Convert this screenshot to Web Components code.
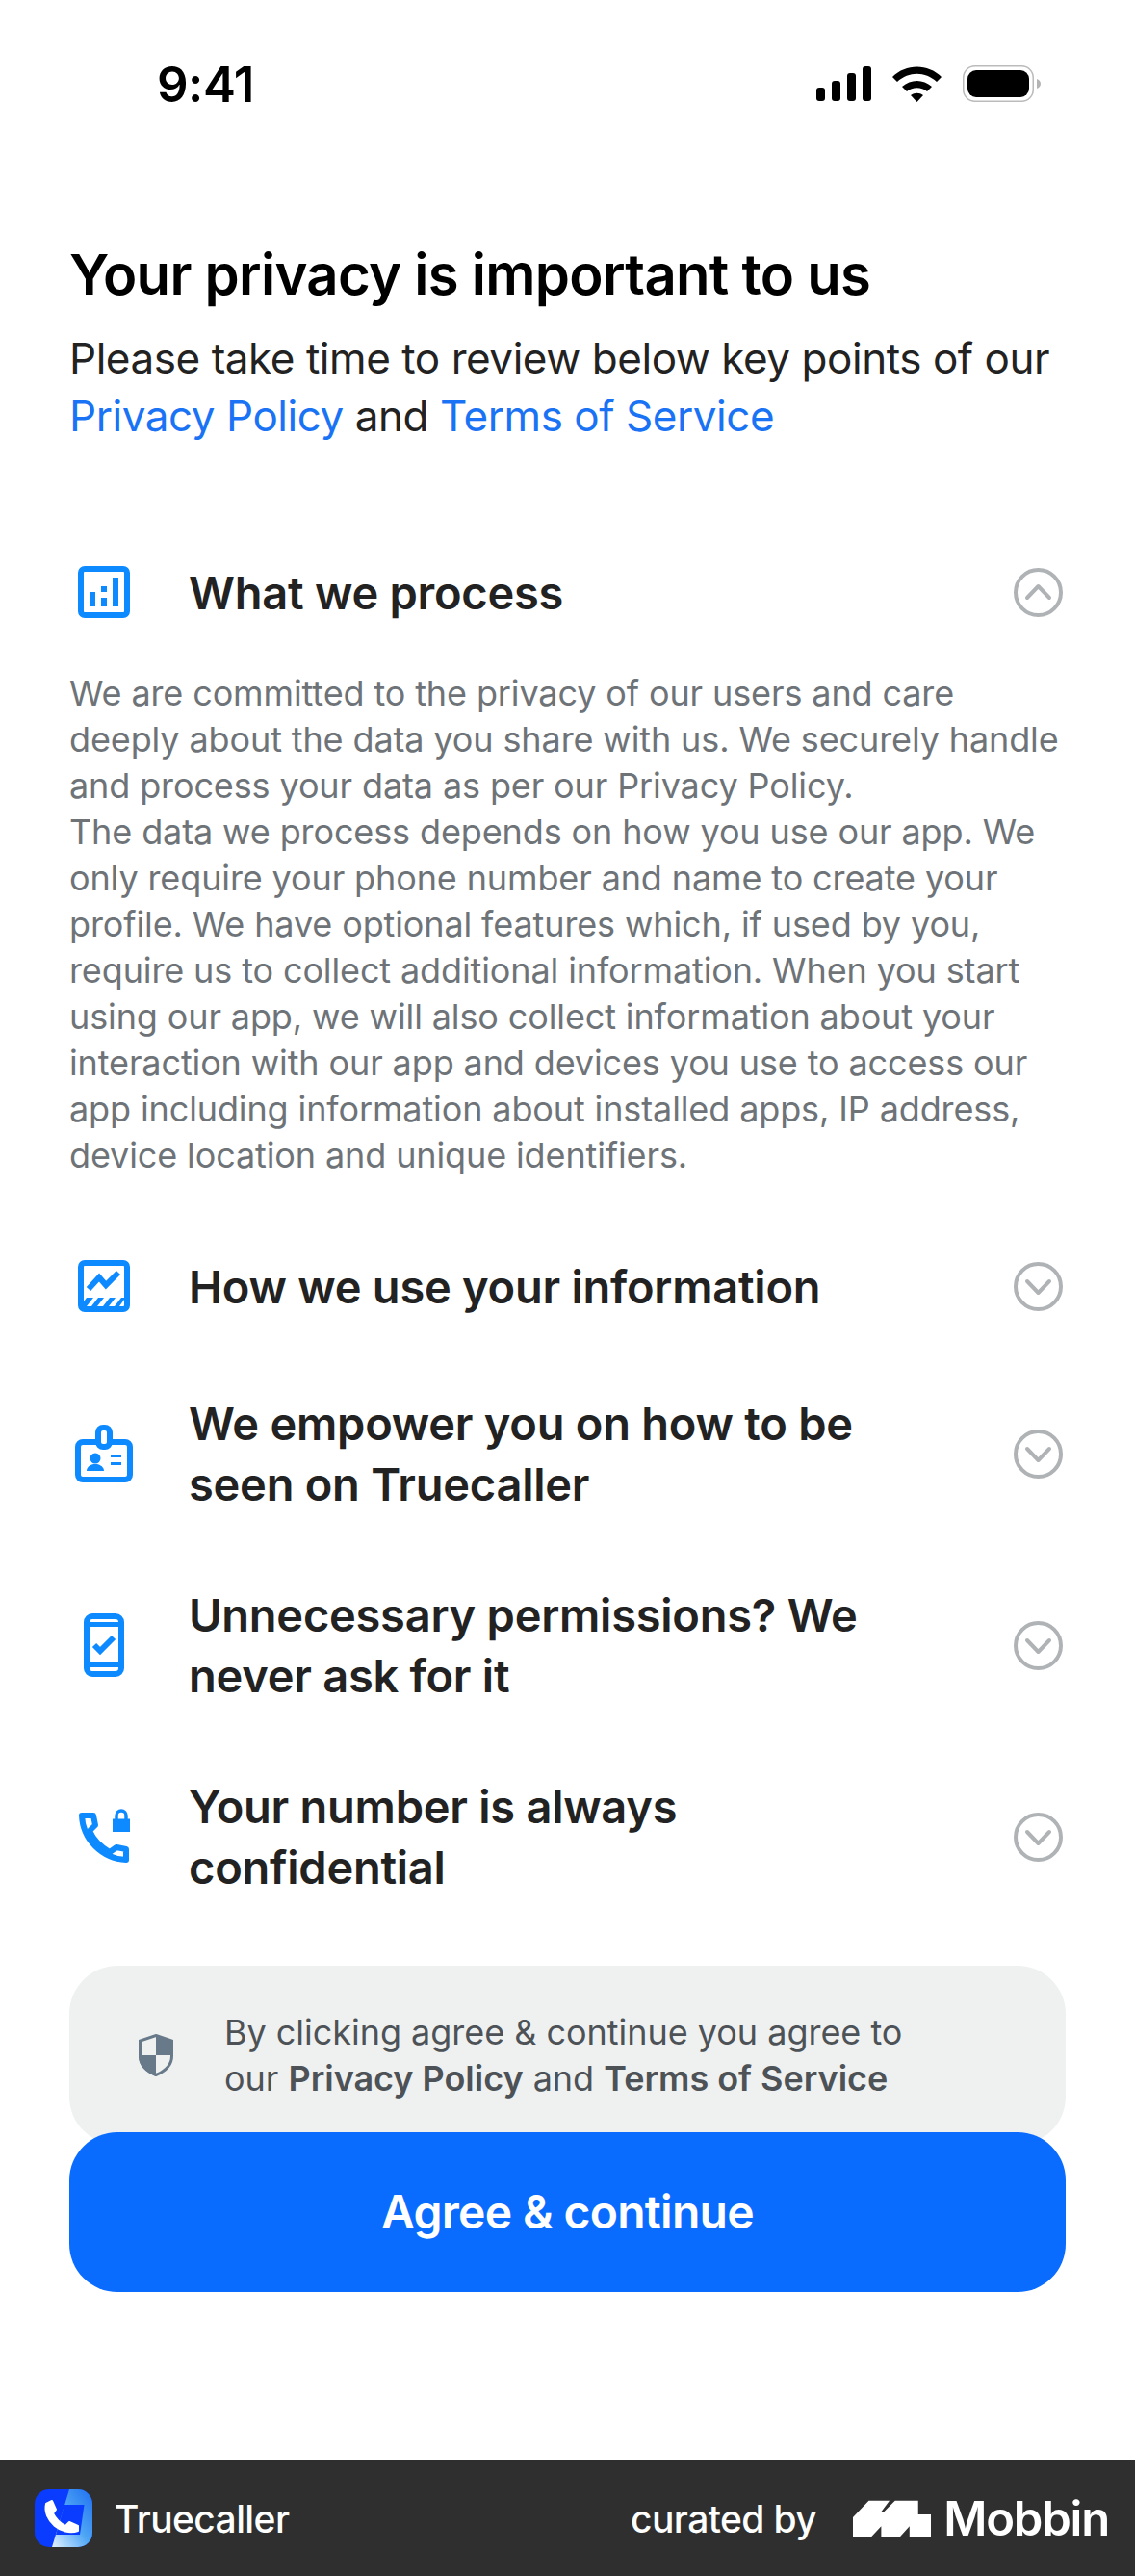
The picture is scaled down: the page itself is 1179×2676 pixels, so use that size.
<!DOCTYPE html>
<html lang="en">
<head>
<meta charset="utf-8">
<title>Truecaller privacy</title>
<style>
  html, body { margin: 0; padding: 0; background: #fff; }
  body { font-family: Inter, "Noto Sans", sans-serif; }
  a { color: #1a73f5; text-decoration: none; }
  b { font-weight: 600; }
  consent-card span { display: block; }
</style>
</head>
<body>
<privacy-screen>
  <status-bar slot="status"></status-bar>
  <privacy-intro heading="Your privacy is important to us">
    Please take time to review below key points of our
    <a>Privacy Policy</a> and <a>Terms of Service</a>
  </privacy-intro>
  <accordion-list>
    <accordion-item icon="bars" open>
      <span slot="title">What we process</span>
      We are committed to the privacy of our users and care deeply about the data you share with us. We securely handle and process your data as per our Privacy Policy.<br>
      The data we process depends on how you use our app. We only require your phone number and name to create your profile. We have optional features which, if used by you, require us to collect additional information. When you start using our app, we will also collect information about your interaction with our app and devices you use to access our app including information about installed apps, IP address, device location and unique identifiers.
    </accordion-item>
    <accordion-item icon="chart"><span slot="title">How we use your information</span></accordion-item>
    <accordion-item icon="badge"><span slot="title">We empower you on how to be seen on Truecaller</span></accordion-item>
    <accordion-item icon="phone"><span slot="title">Unnecessary permissions? We never ask for it</span></accordion-item>
    <accordion-item icon="lock"><span slot="title">Your number is always confidential</span></accordion-item>
  </accordion-list>
  <consent-card>
    <span>By clicking agree &amp; continue you agree to</span>
    <span>our <b>Privacy Policy</b> and <b>Terms of Service</b></span>
  </consent-card>
  <primary-button>Agree &amp; continue</primary-button>
  <mobbin-footer slot="footer"></mobbin-footer>
</privacy-screen>

<script>
// the icons are traced from the reference, each one sits in a 60px wide box
const ICONS = {
  bars: `<svg width="60" height="60" viewBox="0 0 60 60">
      <rect x="6" y="6" width="48" height="48" rx="4" fill="none" stroke="currentColor" stroke-width="6"/>
      <path fill="currentColor" d="M15 30h6v15h-6zM27 24h6v6h-6zM27 36h6v9h-6zM39 15h6v30h-6z"/>
    </svg>`,
  chart: `<svg width="60" height="60" viewBox="0 0 60 60">
      <rect x="6" y="6" width="48" height="48" rx="4" fill="none" stroke="currentColor" stroke-width="6"/>
      <path fill="none" stroke="currentColor" stroke-width="6" d="M14 33l11-12 7 8 13-13"/>
      <path fill="currentColor" d="M9 51v-5l3-4h7l-7 9zM17 51l7-9h6l-7 9zM29 51l7-9h6l-7 9zM41 51l7-9h3v2l-5 7z"/>
    </svg>`,
  badge: `<svg width="60" height="62" viewBox="0 0 60 62">
      <rect x="3" y="19" width="54" height="39" rx="5" fill="none" stroke="currentColor" stroke-width="6"/>
      <rect x="24" y="4" width="12" height="20" rx="5" fill="#fff" stroke="currentColor" stroke-width="6"/>
      <circle cx="21" cy="36" r="5.500" fill="currentColor"/>
      <path fill="currentColor" d="M12 49c0-4 4-7 9-7s9 3 9 7zM37 32h11v3H37zM37 40h11v3H37z"/>
    </svg>`,
  phone: `<svg width="60" height="70" viewBox="0 0 60 70">
      <rect x="12" y="5" width="36" height="60" rx="6" fill="none" stroke="currentColor" stroke-width="6"/>
      <path fill="currentColor" d="M12 11h36v5H12zM12 53h36v5H12z"/>
      <path fill="none" stroke="currentColor" stroke-width="6" d="M20 35l6 6 14-14"/>
    </svg>`,
  lock: `<svg width="60" height="60" viewBox="0 0 60 60">
      <path fill="none" stroke="currentColor" stroke-width="6" stroke-linejoin="round" d="M7 8h12l2 10-6 6c4 9 12 17 21 22l7-5 10 2v11C28 53 8 33 7 8z"/>
      <path fill="currentColor" d="M39 11.500h18V25H39z"/>
      <path fill="none" stroke="currentColor" stroke-width="3.500" d="M43 12V8a5 5 0 0 1 10 0v4"/>
    </svg>`
};

class PrivacyScreen extends HTMLElement {
  constructor() {
    super();
    this.attachShadow({ mode: 'open' });
    this.shadowRoot.innerHTML = `
      <style>
        :host { display: flex; flex-direction: column; height: 2676px; overflow: hidden; }
        main { flex: 1; display: flex; flex-direction: column; padding: 0 72px; }
      </style>
      <slot name="status"></slot>
      <main><slot></slot></main>
      <slot name="footer"></slot>
    `;
  }
}

class StatusBar extends HTMLElement {
  constructor() {
    super();
    this.attachShadow({ mode: 'open' });
    this.shadowRoot.innerHTML = `
      <style>
        :host { display: flex; align-items: center; justify-content: space-between; height: 174px; box-sizing: border-box; padding: 0 98px 0 163px; }
        .time { font: 600 51px/1 Inter, sans-serif; color: #000; letter-spacing: -0.5px; }
        .icons { display: flex; align-items: center; gap: 22px; }
        svg { display: block; }
      </style>
      <span class="time">9:41</span>
      <div class="icons">
        <svg width="57" height="36" viewBox="0 0 57 36" fill="#000">
          <rect x="0" y="22" width="9" height="14" rx="3"/><rect x="16" y="15" width="9" height="21" rx="3"/>
          <rect x="32" y="7" width="9" height="29" rx="3"/><rect x="48" y="0" width="9" height="36" rx="3"/>
        </svg>
        <svg width="51" height="37" viewBox="0 0 51 37" fill="#000">
          <path d="M0 11C14 -3 37 -3 51 11l-5 5C34 5 17 5 5 16z"/>
          <path d="M10 21c9-8 22-8 31 0l-5 5c-6-5-15-5-21 0z"/>
          <path d="M19 30c4-3 9-3 13 0l-6.500 7z"/>
        </svg>
        <svg width="81" height="38" viewBox="0 0 81 38">
          <rect x="0.750" y="0.750" width="72.500" height="36.500" rx="12" fill="#fff" stroke="#bbb" stroke-width="1.500"/>
          <rect x="5" y="5" width="64" height="28" rx="9" fill="#000"/>
          <path d="M77 14c2 .5 4 2.500 4 5s-2 4.500-4 5z" fill="#b4b4b4"/>
        </svg>
      </div>
    `;
  }
}

class PrivacyIntro extends HTMLElement {
  constructor() {
    super();
    this.attachShadow({ mode: 'open' });
    this.shadowRoot.innerHTML = `
      <style>
        :host { display: block; margin-top: 76px; color: #222; }
        h1 { margin: 0 0 22px; font: 600 58px/70px Inter, sans-serif; color: #000; letter-spacing: -0.7px; }
        p { margin: 0; font: 400 44px/60px Inter, sans-serif; letter-spacing: -0.45px; }
      </style>
      <h1></h1>
      <p><slot></slot></p>
    `;
    this.shadowRoot.querySelector('h1').textContent = this.getAttribute('heading');
  }
}

class AccordionList extends HTMLElement {
  constructor() {
    super();
    this.attachShadow({ mode: 'open' });
    this.shadowRoot.innerHTML = `
      <style>
        :host { display: flex; flex-direction: column; gap: 73px; margin-top: 115px; }
      </style>
      <slot></slot>
    `;
  }
}

class AccordionItem extends HTMLElement {
  constructor() {
    super();
    this.attachShadow({ mode: 'open' });
    const open = this.hasAttribute('open');
    // collapsed rows point down, the open one up
    const chevron = open ? 'M14 31l11.500-12L37 31' : 'M14 20l11.500 12L37 20';
    this.shadowRoot.innerHTML = `
      <style>
        :host { display: block; }
        .head { display: flex; align-items: center; min-height: 76px; }
        .icon { flex: none; width: 60px; margin-left: 6px; display: flex; justify-content: center; color: #0d8aff; }
        .title { width: 770px; margin-left: 58px; font: 600 47px/63px Inter, sans-serif; color: #222; letter-spacing: -0.25px; }
        .chev { flex: none; margin-left: auto; margin-right: 3px; display: block; }
        .body { margin-top: 43px; margin-bottom: 1px; font: 400 36px/48px Inter, sans-serif; color: #6e7378; letter-spacing: -0.12px; }
      </style>
      <div class="head">
        <div class="icon">${ICONS[this.getAttribute('icon')]}</div>
        <div class="title"><slot name="title"></slot></div>
        <svg class="chev" width="51" height="51" viewBox="0 0 51 51" fill="none" stroke="#b0b3b5" stroke-width="4" stroke-linecap="round" stroke-linejoin="round">
          <circle cx="25.500" cy="25.500" r="23.500"/><path d="${chevron}"/>
        </svg>
      </div>
      ${open ? '<div class="body"><slot></slot></div>' : ''}
    `;
  }
}

class ConsentCard extends HTMLElement {
  constructor() {
    super();
    this.attachShadow({ mode: 'open' });
    this.shadowRoot.innerHTML = `
      <style>
        :host { display: flex; align-items: center; margin-top: 71px; height: 186px; box-sizing: border-box; padding: 0 60px 0 72px; background: #eff1f1; border-radius: 50px; color: #4d5257; font: 400 36px/48px Inter, sans-serif; letter-spacing: -0.03px; }
        svg { flex: none; display: block; }
        div { margin-left: 53px; }
      </style>
      <svg width="36" height="44" viewBox="0 0 36 44">
        <path fill="#eff1f1" stroke="#687a8a" stroke-width="3" d="M18 1.500L34.500 7v16c0 9-7 15.500-16.500 19.500C8.500 38.500 1.500 32 1.500 23V7z"/>
        <path fill="#687a8a" d="M18 1L36 7v15H18zM18 22v22C8 40 0 33 0 23v-1z"/>
      </svg>
      <div><slot></slot></div>
    `;
  }
}

class PrimaryButton extends HTMLElement {
  constructor() {
    super();
    this.attachShadow({ mode: 'open' });
    this.shadowRoot.innerHTML = `
      <style>
        :host { display: block; position: relative; margin-top: -13px; }
        button { display: block; width: 100%; height: 166px; border: 0; padding: 0; border-radius: 50px; background: #0a6cff; color: #fff; font: 600 48px/1 Inter, sans-serif; letter-spacing: -0.7px; }
      </style>
      <button><slot></slot></button>
    `;
  }
}

class MobbinFooter extends HTMLElement {
  constructor() {
    super();
    this.attachShadow({ mode: 'open' });
    this.shadowRoot.innerHTML = `
      <style>
        :host { display: flex; align-items: center; height: 120px; box-sizing: border-box; padding: 0 27px 0 36px; background: #2f2f2f; color: #fff; font: 500 39px/1 Inter, sans-serif; letter-spacing: -0.6px; }
        svg { display: block; flex: none; }
        .app { margin-left: 23px; }
        .by { margin-left: auto; }
        .logo { margin-left: 38px; }
        .brand { margin-left: 13px; font-weight: 600; font-size: 49px; letter-spacing: -1.2px; }
      </style>
      <svg width="60" height="60" viewBox="0 0 60 60">
        <defs>
          <linearGradient id="tc" x1="0" y1="1" x2="1" y2="0">
            <stop offset="0" stop-color="#e4f2ff"/><stop offset="0.5" stop-color="#4ea6f5"/><stop offset="1" stop-color="#1f6ff0"/>
          </linearGradient>
          <clipPath id="tile"><rect width="60" height="60" rx="15"/></clipPath>
        </defs>
        <g clip-path="url(#tile)">
          <rect width="60" height="60" fill="#0a3cff"/>
          <path d="M36 0h24v60H18z" fill="url(#tc)"/>
          <path d="M31 16h20.500L47 47H22z" fill="#0a3cff"/>
          <path d="M12 15l6-3 4 9-3 4c3 6 7 10 13 13l4-4 9 4v5c-17 6-37-11-33-28z" fill="#fff" stroke="#fff" stroke-width="2" stroke-linejoin="round"/>
        </g>
      </svg>
      <span class="app">Truecaller</span>
      <span class="by">curated by</span>
      <svg class="logo" width="81" height="38" viewBox="746 168 226 114" preserveAspectRatio="none">
        <path fill="#fff" d="M746 222L792 170h60L828 205l8 0L868 170h67v43h37v69H910v-32l-27 32H828v-32l-28 32h-54z"/>
      </svg>
      <span class="brand">Mobbin</span>
    `;
  }
}

customElements.define('privacy-screen', PrivacyScreen);
customElements.define('status-bar', StatusBar);
customElements.define('privacy-intro', PrivacyIntro);
customElements.define('accordion-list', AccordionList);
customElements.define('accordion-item', AccordionItem);
customElements.define('consent-card', ConsentCard);
customElements.define('primary-button', PrimaryButton);
customElements.define('mobbin-footer', MobbinFooter);
</script>
</body>
</html>
